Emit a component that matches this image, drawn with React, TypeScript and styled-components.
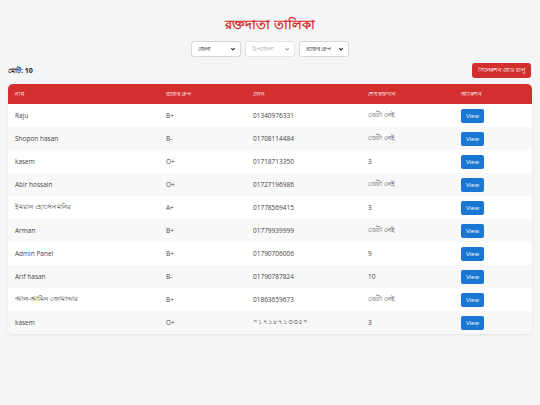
import React from "react";
import styled, { createGlobalStyle } from "styled-components";

const Global = createGlobalStyle`
  html, body { margin: 0; padding: 0; background: #f4f5f7; }
  body { font-family: "Open Sans", "Noto Sans", sans-serif; color: #333; }
  * { box-sizing: border-box; }
`;

const Page = styled.div`
  padding: 14px 8px 20px 8px;
`;

const Title = styled.h1`
  margin: 0;
  text-align: center;
  color: #d32f2f;
  font-size: 13px;
  font-weight: 700;
  line-height: 20px;
`;

const Filters = styled.div`
  display: flex;
  justify-content: center;
  gap: 4px;
  margin-top: 7px;
`;

const SelectBox = styled.div<{ disabled?: boolean }>`
  width: 50px;
  height: 16px;
  background: #fff;
  border: 1px solid ${(p) => (p.disabled ? "#e4e4e4" : "#d6d6d6")};
  border-radius: 3px;
  display: flex;
  align-items: center;
  justify-content: space-between;
  padding: 0 4px 0 6px;
  font-size: 5.5px;
  color: ${(p) => (p.disabled ? "#aaa" : "#222")};
`;

const Chevron = styled.svg<{ disabled?: boolean }>`
  width: 6px;
  height: 6px;
  stroke: ${(p) => (p.disabled ? "#aaa" : "#333")};
`;

const Toolbar = styled.div`
  display: flex;
  justify-content: space-between;
  align-items: center;
  margin-top: 6px;
`;

const Total = styled.div`
  font-size: 7px;
  font-weight: 700;
  color: #222;
  padding-top: 1px;
`;

const RedButton = styled.button`
  background: #d32f2f;
  color: #fff;
  border: none;
  border-radius: 3px;
  height: 15px;
  width: 59px;
  font-family: inherit;
  font-size: 5.5px;
  padding: 0;
  margin-right: 1px;
`;

const TableWrap = styled.div`
  margin-top: 6px;
  background: #fff;
  border-radius: 5px;
  overflow: hidden;
  box-shadow: 0 1px 3px rgba(0, 0, 0, 0.08);
`;

const Table = styled.table`
  width: 100%;
  border-collapse: collapse;
  table-layout: fixed;
`;

const Th = styled.th`
  background: #d32f2f;
  color: #fff;
  text-align: left;
  font-weight: 400;
  font-size: 5.5px;
  height: 20px;
  padding: 0 7px;
`;

const Tr = styled.tr<{ $alt: boolean }>`
  background: ${(p) => (p.$alt ? "#f8f8f8" : "#fff")};
`;

const Td = styled.td`
  font-size: 6.5px;
  font-weight: 400;
  color: #444;
  height: 23px;
  padding: 0 7px;
  white-space: nowrap;
`;

const ViewButton = styled.button`
  background: #1976d2;
  color: #fff;
  border: none;
  border-radius: 2px;
  width: 23px;
  height: 14px;
  font-family: inherit;
  font-size: 6px;
  font-weight: 400;
  padding: 0;
  display: block;
`;

const rows = [
  ["Raju", "B+", "01340976331", "ডেটা নেই"],
  ["Shopon hasan", "B-", "01708114484", "ডেটা নেই"],
  ["kasem", "O+", "01718713350", "3"],
  ["Abir hossain", "O+", "01727196986", "ডেটা নেই"],
  ["ইমরান হোসেন মনির", "A+", "01778569415", "3"],
  ["Arman", "B+", "01779939999", "ডেটা নেই"],
  ["Admin Panel", "B+", "01790706006", "9"],
  ["Arif hasan", "B-", "01790787824", "10"],
  ["আল-আমিন জোমাদ্দার", "B+", "01863659673", "ডেটা নেই"],
  ["kasem", "O+", "০১৭১৮৭১৩৩৫০", "3"],
];

const Select = ({ label, disabled }: { label: string; disabled?: boolean }) => (
  <SelectBox disabled={disabled}>
    <span>{label}</span>
    <Chevron disabled={disabled} viewBox="0 0 10 10" fill="none" strokeWidth="1.8">
      <path d="M2 3.5 L5 6.5 L8 3.5" />
    </Chevron>
  </SelectBox>
);

export default function App() {
  return (
    <>
      <Global />
      <Page>
        <Title>রক্তদাতা তালিকা</Title>
        <Filters>
          <Select label="জেলা" />
          <Select label="উপজেলা" disabled />
          <Select label="রক্তের গ্রুপ" />
        </Filters>
        <Toolbar>
          <Total>মোট: 10</Total>
          <RedButton>সিলেকশন মোড চালু</RedButton>
        </Toolbar>
        <TableWrap>
          <Table>
            <colgroup>
              <col style={{ width: 151 }} />
              <col style={{ width: 87 }} />
              <col style={{ width: 115 }} />
              <col style={{ width: 93 }} />
              <col />
            </colgroup>
            <thead>
              <tr>
                <Th>নাম</Th>
                <Th>রক্তের গ্রুপ</Th>
                <Th>ফোন</Th>
                <Th>শেষ রক্তদান</Th>
                <Th>অ্যাকশন</Th>
              </tr>
            </thead>
            <tbody>
              {rows.map((r, i) => (
                <Tr key={i} $alt={i % 2 === 1}>
                  <Td>{r[0]}</Td>
                  <Td>{r[1]}</Td>
                  <Td>{r[2]}</Td>
                  <Td>{r[3]}</Td>
                  <Td>
                    <ViewButton>View</ViewButton>
                  </Td>
                </Tr>
              ))}
            </tbody>
          </Table>
        </TableWrap>
      </Page>
    </>
  );
}
